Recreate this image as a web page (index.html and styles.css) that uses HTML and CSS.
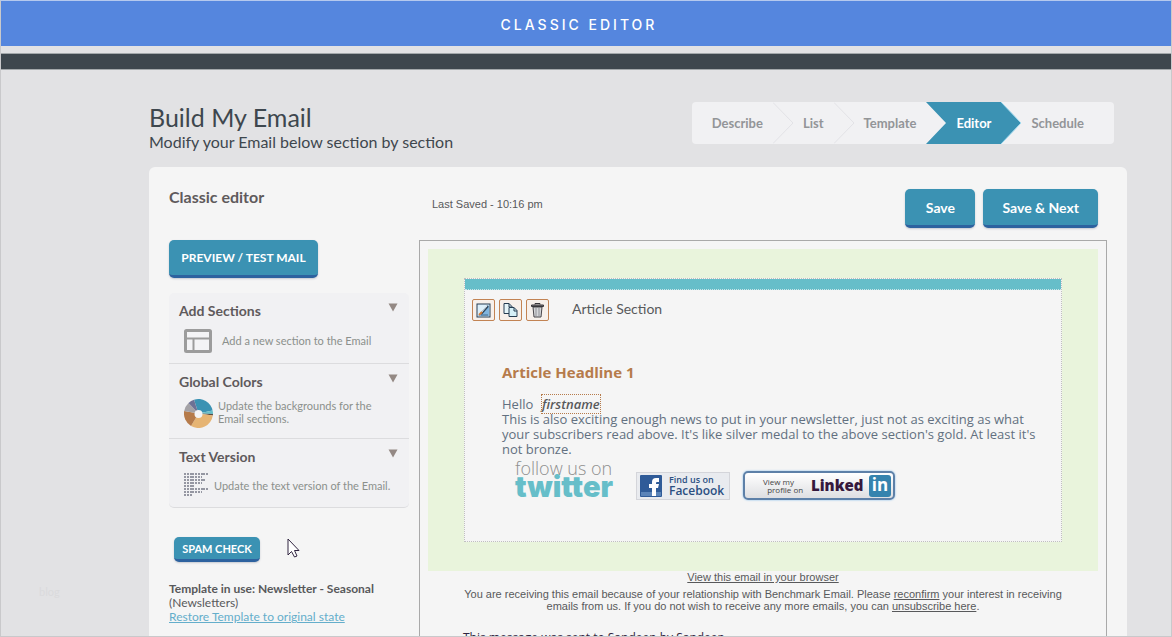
FILE: index.html
```html
<!DOCTYPE html>
<html lang="en">
<head>
    <meta charset="UTF-8">
    <meta name="viewport" content="width=device-width, initial-scale=1.0">
    <title>Classic Editor</title>
    <link rel="stylesheet" href="styles.css">
</head>
<body>
    <div class="page">
        <div class="banner">CLASSIC EDITOR</div>
        <div class="dark-bar"></div>

        <div class="content">
            <header class="page-head">
                <div>
                    <h1>Build My Email</h1>
                    <p class="subtitle">Modify your Email below section by section</p>
                </div>
                <nav class="steps">
                    <a href="#describe">Describe</a>
                    <svg width="20" height="42" viewBox="0 0 20 42"><path d="M0 0.5L20 21L0 41.5" fill="none" stroke="#e2e2e6"/></svg>
                    <a href="#list">List</a>
                    <svg width="20" height="42" viewBox="0 0 20 42"><path d="M0 0.5L20 21L0 41.5" fill="none" stroke="#e2e2e6"/></svg>
                    <a href="#template">Template</a>
                    <svg width="20" height="42" viewBox="0 0 20 42"><path d="M0 0H20V42H0L20 21Z" fill="#3b92b3"/></svg>
                    <a href="#editor" class="active">Editor</a>
                    <svg width="20" height="42" viewBox="0 0 20 42"><path d="M0 0L20 21L0 42Z" fill="#3b92b3"/><path d="M0 0L20 21L0 42" fill="none" stroke="#a5dbef"/></svg>
                    <a href="#schedule" class="last">Schedule</a>
                </nav>
            </header>

            <main class="panel">
                <div class="sidebar">
                    <h2>Classic editor</h2>
                    <button class="btn btn-preview">PREVIEW / TEST MAIL</button>

                    <div class="menu">
                        <section class="menu-item">
                            <h3>Add Sections</h3>
                            <svg class="caret" width="10" height="9" viewBox="0 0 10 9"><path d="M0.5 0.5H9.5L5 8.5Z" fill="#948984"/></svg>
                            <div class="menu-text add">
                                <svg width="28" height="24" viewBox="0 0 28 24"><rect x="1.5" y="1.5" width="25" height="21" rx="1" fill="#f4f4f6" stroke="#9c9c9c" stroke-width="3"/><path d="M3 9.5H25M9.5 9V21" stroke="#9c9c9c" stroke-width="2" fill="none"/></svg>
                                <p>Add a new section to the Email</p>
                            </div>
                        </section>
                        <section class="menu-item">
                            <h3>Global Colors</h3>
                            <svg class="caret" width="10" height="9" viewBox="0 0 10 9"><path d="M0.5 0.5H9.5L5 8.5Z" fill="#948984"/></svg>
                            <div class="menu-text colors">
                                <svg width="29" height="29" viewBox="0 0 29 29">
                                    <path d="M14.5 14.5L10 0.7A14.5 14.5 0 0 1 28.6 11.5Z" fill="#3b92b3"/>
                                    <path d="M14.5 14.5L28.6 11.5A14.5 14.5 0 0 1 29 15Z" fill="#66bec9"/>
                                    <path d="M14.5 14.5L29 15A14.5 14.5 0 0 1 28.8 16.5Z" fill="#594a43"/>
                                    <path d="M14.5 14.5L28.8 16.5A14.5 14.5 0 0 1 7 27Z" fill="#e6b473"/>
                                    <path d="M14.5 14.5L7 27A14.5 14.5 0 0 1 0.2 12Z" fill="#b67b4b"/>
                                    <path d="M14.5 14.5L0.2 12A14.5 14.5 0 0 1 4.5 4Z" fill="#a4a2a6"/>
                                    <path d="M14.5 14.5L4.5 4A14.5 14.5 0 0 1 10 0.7Z" fill="#6d7195"/>
                                    <circle cx="14.5" cy="15" r="4" fill="#f4f4f6"/>
                                </svg>
                                <p>Update the backgrounds for the Email sections.</p>
                            </div>
                        </section>
                        <section class="menu-item">
                            <h3>Text Version</h3>
                            <svg class="caret" width="10" height="9" viewBox="0 0 10 9"><path d="M0.5 0.5H9.5L5 8.5Z" fill="#948984"/></svg>
                            <div class="menu-text version">
                                <svg width="25" height="24" viewBox="0 0 25 24"><path d="M0 1H24M0 4H18M0 7H21M0 10H18M0 13H11M0 16H24M0 19H18M0 22H8" fill="none" stroke="#9597a2" stroke-width="2" stroke-dasharray="2 1 2 1 4 1"/></svg>
                                <p>Update the text version of the Email.</p>
                            </div>
                        </section>
                    </div>

                    <button class="btn btn-spam">SPAM CHECK</button>
                    <div class="template-info">
                        <p><b>Template in use: Newsletter - Seasonal</b></p>
                        <p>(Newsletters)</p>
                        <a href="#restore">Restore Template to original state</a>
                    </div>
                </div>

                <div class="editor">
                    <div class="toolbar">
                        <span class="saved">Last Saved - 10:16 pm</span>
                        <button class="btn btn-save">Save</button>
                        <button class="btn btn-save">Save &amp; Next</button>
                    </div>

                    <div class="preview">
                        <div class="mail">
                            <article class="article">
                                <div class="article-bar"></div>
                                <div class="article-tools">
                                    <button class="tool" aria-label="Edit">
                                        <svg width="15" height="15" viewBox="0 0 15 15"><rect x="1" y="1" width="13" height="13" fill="#dceffa" stroke="#263d52"/><path d="M13 2V13H2Z" fill="#80b5df"/><path d="M5 11L12 3" stroke="#2d465c" stroke-width="2"/><path d="M5 10L11 3" stroke="#e5edf2" stroke-width="1"/><path d="M3 12L6 9" stroke="#d47b38" stroke-width="2"/><path d="M5 12H12" stroke="#456b8b"/></svg>
                                    </button>
                                    <button class="tool" aria-label="Copy">
                                        <svg width="15" height="15" viewBox="0 0 15 15"><path d="M1 .5H6L9 3.5V10.5H1Z" fill="#e5f5fa" stroke="#263d52"/><path d="M6 .5V4H9" fill="none" stroke="#263d52"/><path d="M6 4.5H11L14 7.5V13.5H6Z" fill="#d5f0f8" stroke="#263d52"/><path d="M11 4.5V8H14" fill="none" stroke="#263d52"/></svg>
                                    </button>
                                    <button class="tool" aria-label="Delete">
                                        <svg width="15" height="15" viewBox="0 0 15 15"><path d="M3 4H12L11 14H4Z" fill="#d5d6d9" stroke="#474449"/><path d="M6 5V13M9 5V13" stroke="#929297"/><path d="M1.5 3.5H13.5V2H1.5Z" fill="#777578" stroke="#38373a"/><path d="M5 1.5V.5H10V1.5" fill="none" stroke="#38373a"/></svg>
                                    </button>
                                    <span class="section-name">Article Section</span>
                                </div>
                                <div class="article-body">
                                    <h4>Article Headline 1</h4>
                                    <p>Hello &nbsp;<i class="tag">firstname</i></p>
                                    <p>This is also exciting enough news to put in your newsletter, just not as exciting as what your subscribers read above. It's like silver medal to the above section's gold. At least it's not bronze.</p>
                                    <div class="social">
                                        <a href="#twitter" class="twitter"><span>follow us on</span><strong>twitter</strong></a>
                                        <a href="#facebook" class="facebook">
                                            <svg width="22" height="22" viewBox="0 0 22 22"><rect width="22" height="22" rx="1" fill="#2f5b98"/><path d="M1 17H21V21H1Z" fill="#5a83b8"/><path d="M12 21V13H9V9H12V7Q12 3 16 3H19V7H17Q16 7 16 8V9H19L18 13H16V21Z" fill="#fff"/></svg>
                                            <span><small>Find us on</small><b>Facebook</b></span>
                                        </a>
                                        <a href="#linkedin" class="linkedin">
                                            <span class="view">View my<br>&nbsp; profile on</span>
                                            <b>Linked</b>
                                            <span class="in">in</span>
                                        </a>
                                    </div>
                                </div>
                            </article>
                        </div>
                        <div class="mail-footer">
                            <a href="#browser">View this email in your browser</a>
                            <p>You are receiving this email because of your relationship with Benchmark Email. Please <a href="#reconfirm">reconfirm</a> your interest in receiving emails from us. If you do not wish to receive any more emails, you can <a href="#unsubscribe">unsubscribe here</a>.</p>
                        </div>
                        <p class="sent">This message was sent to Sandeep by Sandeep</p>
                    </div>
                </div>
            </main>
        </div>

        <span class="watermark">blog</span>
        <svg class="cursor" width="13" height="20" viewBox="0 0 13 20"><path d="M1 1V17L4.5 13.5L7.5 19L10 18L7.5 12.5H12Z" fill="#fff" stroke="#302440"/></svg>
    </div>
</body>
</html>
```
FILE: styles.css
```css
* {
    box-sizing: border-box;
}
body {
    margin: 0;
    font-family: Lato, "Liberation Sans", sans-serif;
    color: #58595b;
}
h1, h2, h3, h4, p {
    margin: 0;
}
svg {
    display: block;
    flex: none;
}
a {
    color: inherit;
}
.page {
    position: relative;
    height: 100vh;
    overflow: hidden;
    background: #e2e2e4;
    border: 1px solid #c9c9cb;
    border-top-color: #b5c9ee;
}
.banner {
    height: 45px;
    padding-right: 14px;
    line-height: 47px;
    background: #5586de;
    color: #fff;
    font-family: Inter, sans-serif;
    font-size: 14px;
    font-weight: 500;
    letter-spacing: 3px;
    text-align: center;
}
.dark-bar {
    height: 17px;
    margin-top: 7px;
    background: #3e474e;
    border-top: 1px solid #a3a8ab;
    border-bottom: 1px solid #a3a8ab;
}
.content {
    padding: 31px 44px 0 148px;
}

/* heading and steps */
.page-head {
    display: flex;
    justify-content: space-between;
    height: 66px;
    padding-right: 13px;
    color: #3e474e;
}
h1 {
    font-size: 25px;
    line-height: 32px;
    font-weight: 400;
}
.subtitle {
    font-size: 16px;
    line-height: 18px;
}
.steps {
    display: flex;
    align-items: center;
    height: 42px;
    margin-top: 1px;
    background: #f1f1f3;
    border-radius: 4px;
    overflow: hidden;
    font-size: 13px;
    font-weight: 700;
    line-height: 42px;
    color: #939598;
}
.steps a {
    padding: 0 10px;
    text-decoration: none;
}
.steps a:first-child {
    padding-left: 20px;
}
.steps .last {
    padding-right: 30px;
}
.steps .active {
    background: #3b92b3;
    color: #fff;
}

/* panel */
.panel {
    display: grid;
    grid-template-columns: 240px 1fr;
    gap: 10px;
    padding: 22px 20px 0;
    background: #f5f5f5;
    border-radius: 6px 6px 0 0;
}
h2 {
    height: 51px;
    font-size: 16px;
    line-height: 16px;
    color: #5f5a5c;
}
.btn {
    display: block;
    padding: 0;
    border: none;
    border-bottom: 3px solid #2d629f;
    border-radius: 5px;
    box-shadow: 0 1px 2px #c4c8d0;
    background: #3b92b3;
    color: #fff;
    font-family: inherit;
    font-weight: 700;
    cursor: pointer;
}
.btn-preview {
    width: 149px;
    height: 38px;
    font-size: 12px;
}
.btn-spam {
    width: 86px;
    height: 25px;
    margin: 29px 0 0 5px;
    font-size: 11px;
}
.btn-save {
    min-width: 70px;
    height: 39px;
    padding: 0 19px;
    font-size: 14px;
}
.menu {
    margin-top: 15px;
    background: #f1f1f3;
    border-radius: 5px;
    border-bottom: 1px solid #dcdcde;
}
.menu-item {
    position: relative;
    padding: 9px 10px 10px;
}
.menu-item + .menu-item {
    border-top: 1px solid #dcdcde;
}
h3 {
    font-size: 14px;
    line-height: 18px;
    color: #5f5a5c;
}
.caret {
    position: absolute;
    top: 10px;
    right: 11px;
}
.menu-text {
    display: flex;
    align-items: center;
    padding-left: 5px;
    font-size: 11px;
    line-height: 13px;
    color: #8b908c;
}
.add {
    gap: 10px;
    min-height: 25px;
    margin-top: 8px;
}
.colors {
    gap: 5px;
    margin-top: 8px;
}
.colors p {
    width: 160px;
    padding-bottom: 3px;
}
.version {
    gap: 5px;
    margin-top: 7px;
}
.template-info {
    margin-top: 20px;
    font-size: 12px;
    line-height: 14px;
}
.template-info a {
    color: #64aecb;
}

/* editor column */
.toolbar {
    display: flex;
    gap: 8px;
    height: 51px;
    padding: 0 9px 0 13px;
}
.saved {
    flex: 1;
    font: 11px/30px "Liberation Sans", Arial, sans-serif;
}
.preview {
    padding: 8px;
    border: 1px solid #a9a9a9;
    font-family: "Liberation Sans", Arial, sans-serif;
}
.mail {
    padding: 29px 36px;
    background: #e9f4dc;
}
.article {
    height: 264px;
    border: 1px dotted #c0c0c0;
    background: #f5f5f5;
}
.article-bar {
    height: 11px;
    background: #66bec9;
    border-bottom: 1px dotted #c9e5e8;
}
.article-tools {
    display: flex;
    gap: 4px;
    padding: 9px 7px 0;
}
.tool {
    display: grid;
    place-items: center;
    width: 23px;
    height: 22px;
    padding: 0;
    border: 1px solid #c28353;
    border-radius: 2px;
    background: #f7f0eb;
}
.section-name {
    margin-left: 19px;
    font: 14px/20px Lato, sans-serif;
}
.article-body {
    padding: 41px 12px 0 37px;
    font: 13px/15px "Open Sans", "Noto Sans", sans-serif;
    color: #627080;
}
h4 {
    margin-bottom: 15px;
    font-size: 15px;
    line-height: 20px;
    color: #b67b4b;
}
.tag {
    margin-left: 2px;
    outline: 1px dotted #b67b4b;
    font-weight: 600;
    color: #58595b;
}
.social {
    display: flex;
    align-items: flex-end;
    padding: 3px 0 0 13px;
}
.social a {
    text-decoration: none;
}
.twitter {
    width: 101px;
    height: 40px;
    margin-right: 20px;
    color: #8f8f8f;
    font-size: 18px;
    line-height: 16px;
    white-space: nowrap;
}
.twitter span {
    display: block;
    font-weight: 300;
}
.twitter strong {
    display: block;
    font: 900 29px/22px Inter, sans-serif;
    color: #66bec9;
}
.facebook {
    display: flex;
    align-items: center;
    gap: 7px;
    width: 94px;
    height: 28px;
    padding-left: 3px;
    border: 1px solid #d4d5da;
    background: #e9ebef;
    color: #2b4f82;
}
.facebook small, .facebook b {
    display: block;
    font-size: 9px;
    line-height: 10px;
    font-weight: 600;
}
.facebook b {
    font-size: 12px;
    line-height: 12px;
}
.linkedin {
    display: flex;
    align-items: center;
    width: 152px;
    height: 29px;
    margin-left: 13px;
    padding: 0 2px 0 18px;
    border: 2px solid #5d80a8;
    border-radius: 5px;
    box-shadow: 0 0 2px #6fb3ea;
    background: linear-gradient(#fff, #dedfe2);
    color: #35183d;
}
.linkedin .view {
    width: 48px;
    font-size: 8px;
    line-height: 8px;
    color: #444;
    white-space: nowrap;
}
.linkedin b {
    flex: 1;
    font-size: 15px;
    font-weight: 800;
}
.linkedin .in {
    width: 22px;
    height: 22px;
    border-radius: 3px;
    background: #3583ae;
    color: #fff;
    font-size: 17px;
    font-weight: 700;
    line-height: 20px;
    text-align: center;
}
.mail-footer {
    padding: 0 36px;
    font-size: 11px;
    line-height: 12px;
    text-align: center;
}
.mail-footer p {
    margin-top: 5px;
}
.sent {
    margin: 19px 0 0 35px;
    font: 12px/14px "Open Sans", "DejaVu Sans", sans-serif;
    color: #302440;
}

/* things lying over the page */
.cursor {
    position: absolute;
    left: 286px;
    top: 537px;
}
.watermark {
    position: absolute;
    left: 38px;
    top: 584px;
    font-size: 11px;
    color: #dadadc;
}
```
